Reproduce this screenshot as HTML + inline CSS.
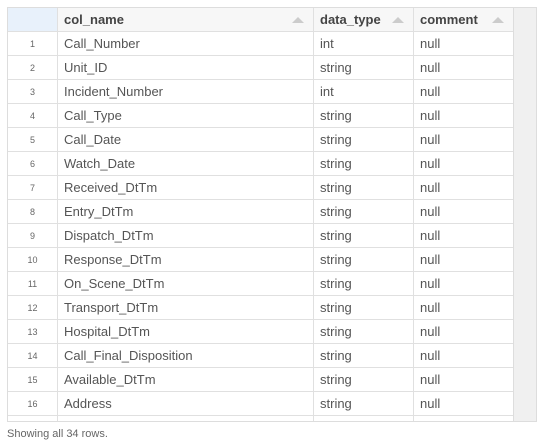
<!DOCTYPE html>
<html><head><style>
body{margin:0;width:543px;height:433px;overflow:hidden;background:#fff;font-family:"Liberation Sans",Arial,sans-serif;}
.wrap{position:absolute;left:7px;top:7px;width:530px;height:415px;overflow:hidden;border:1px solid #ddd;box-sizing:border-box;}
table{border-collapse:collapse;position:absolute;left:-1px;top:-1px;table-layout:fixed;}
td,th{border:1px solid #e0e0e0;height:24px;padding:0 0 0 6px;font-size:13px;color:#555;text-align:left;white-space:nowrap;overflow:hidden;box-sizing:border-box;}
th{background:#f7f7f7;font-weight:bold;color:#444;position:relative;}
th.ix{background:#e8f1fb;}
td.ix{font-size:9px;text-align:center;padding:0;color:#666;}
.ar{position:absolute;right:9px;top:9px;width:0;height:0;border-left:6px solid transparent;border-right:6px solid transparent;border-bottom:6px solid #ccc;}
.sb{position:absolute;left:505px;top:0;width:25px;height:415px;background:#f0f0f0;border-left:1px solid #ddd;}
.foot{position:absolute;left:7px;top:428px;font-size:11px;color:#666;}
</style></head><body>
<div class="wrap">
<table>
<colgroup><col style="width:50px"><col style="width:256px"><col style="width:100px"><col style="width:100px"></colgroup>
<tr><th class="ix"></th><th>col_name<span class="ar"></span></th><th>data_type<span class="ar"></span></th><th>comment<span class="ar"></span></th></tr>
<tr><td class="ix">1</td><td>Call_Number</td><td>int</td><td>null</td></tr>
<tr><td class="ix">2</td><td>Unit_ID</td><td>string</td><td>null</td></tr>
<tr><td class="ix">3</td><td>Incident_Number</td><td>int</td><td>null</td></tr>
<tr><td class="ix">4</td><td>Call_Type</td><td>string</td><td>null</td></tr>
<tr><td class="ix">5</td><td>Call_Date</td><td>string</td><td>null</td></tr>
<tr><td class="ix">6</td><td>Watch_Date</td><td>string</td><td>null</td></tr>
<tr><td class="ix">7</td><td>Received_DtTm</td><td>string</td><td>null</td></tr>
<tr><td class="ix">8</td><td>Entry_DtTm</td><td>string</td><td>null</td></tr>
<tr><td class="ix">9</td><td>Dispatch_DtTm</td><td>string</td><td>null</td></tr>
<tr><td class="ix">10</td><td>Response_DtTm</td><td>string</td><td>null</td></tr>
<tr><td class="ix">11</td><td>On_Scene_DtTm</td><td>string</td><td>null</td></tr>
<tr><td class="ix">12</td><td>Transport_DtTm</td><td>string</td><td>null</td></tr>
<tr><td class="ix">13</td><td>Hospital_DtTm</td><td>string</td><td>null</td></tr>
<tr><td class="ix">14</td><td>Call_Final_Disposition</td><td>string</td><td>null</td></tr>
<tr><td class="ix">15</td><td>Available_DtTm</td><td>string</td><td>null</td></tr>
<tr><td class="ix">16</td><td>Address</td><td>string</td><td>null</td></tr>
<tr><td class="ix">17</td><td>City</td><td>string</td><td>null</td></tr>
</table>
<div class="sb"></div>
</div>
<div class="foot">Showing all 34 rows.</div>
</body></html>
